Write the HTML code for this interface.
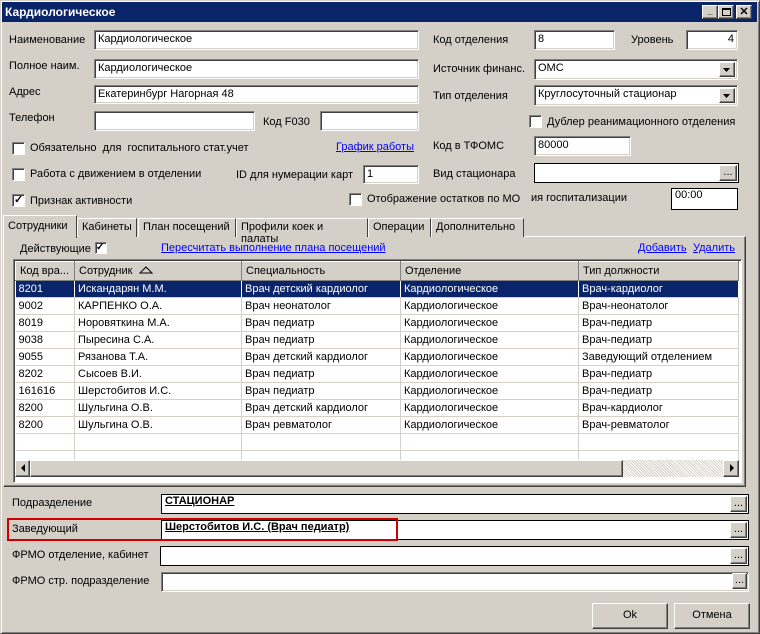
<!DOCTYPE html>
<html><head><meta charset="utf-8"><style>
*{box-sizing:border-box;margin:0;padding:0}
body{width:760px;height:634px;background:#d4d0c8;font-family:"Liberation Sans",sans-serif;font-size:11px;color:#000;position:relative;overflow:hidden}
.a{position:absolute;white-space:nowrap}
.in{position:absolute;background:#fff;border:1px solid;border-color:#808080 #fff #fff #808080;box-shadow:inset 1px 1px 0 #404040,inset -1px -1px 0 #d4d0c8;padding:2px 3px;line-height:13px}
.bk{position:absolute;background:#fff;border:1px solid #000;padding:1px 3px;line-height:13px}
.cb{position:absolute;width:13px;height:13px;background:#fff;border:1px solid;border-color:#808080 #fff #fff #808080;box-shadow:inset 1px 1px 0 #404040}
.btn{position:absolute;background:#d4d0c8;border:1px solid;border-color:#fff #404040 #404040 #fff;box-shadow:inset -1px -1px 0 #808080;text-align:center}
.lnk{color:#0000ff;text-decoration:underline}
.dd{position:absolute;right:2px;top:2px;width:16px;height:15px}
table{border-collapse:collapse;position:absolute;left:15px;top:261px;width:724px}
td{height:17px;border-right:1px solid #d4d0c8;border-bottom:1px solid #d4d0c8;padding:0 3px;background:#fff;white-space:nowrap}
th{height:19px;font-weight:normal;text-align:left;padding:0 4px;background:#d4d0c8;border:1px solid;border-color:#fff #808080 #808080 #fff}
tr.s td{background:#0a246a;color:#fff;border-right-color:#fff}
.tab{position:absolute;top:218px;height:19px;border:1px solid;border-color:#fff #404040 transparent #fff;border-bottom:none;padding:2px 4px;background:#d4d0c8}
</style></head><body>
<!-- frame -->
<div class="a" style="left:0;top:0;width:760px;height:634px;border:1px solid;border-color:#d4d0c8 #404040 #404040 #d4d0c8;box-shadow:inset 1px 1px 0 #fff,inset -1px -1px 0 #808080"></div>
<div class="a" style="left:2px;top:2px;width:755px;height:20px;background:#0a246a;color:#fff;font-weight:bold;font-size:12px;padding:3px 3px">Кардиологическое</div>
<div class="btn" style="left:702px;top:5px;width:16px;height:14px;font-size:9px;line-height:11px;font-weight:bold">_</div>
<div class="btn" style="left:718px;top:5px;width:16px;height:14px"><div style="margin:2px auto;width:9px;height:8px;border:1px solid #000;border-top-width:2px"></div></div>
<div class="btn" style="left:736px;top:5px;width:16px;height:14px;font-weight:bold;line-height:12px;font-size:11px">✕</div>

<div class="a" style="left:9px;top:34px">Наименование</div>
<div class="in" style="left:94px;top:30px;width:325px;height:20px">Кардиологическое</div>
<div class="a" style="left:9px;top:60px">Полное наим.</div>
<div class="in" style="left:94px;top:59px;width:325px;height:20px">Кардиологическое</div>
<div class="a" style="left:9px;top:86px">Адрес</div>
<div class="in" style="left:94px;top:85px;width:325px;height:19px">Екатеринбург Нагорная 48</div>
<div class="a" style="left:9px;top:112px">Телефон</div>
<div class="in" style="left:94px;top:111px;width:161px;height:20px"></div>
<div class="a" style="left:263px;top:116px">Код F030</div>
<div class="in" style="left:320px;top:111px;width:99px;height:20px"></div>

<div class="cb" style="left:12px;top:142px"></div><div class="a" style="left:30px;top:142px">Обязательно &nbsp;для &nbsp;госпитального стат.учет</div>
<div class="a lnk" style="left:336px;top:141px">График работы</div>
<div class="cb" style="left:12px;top:168px"></div><div class="a" style="left:30px;top:168px">Работа с движением в отделении</div>
<div class="a" style="left:236px;top:169px">ID для нумерации карт</div>
<div class="in" style="left:363px;top:165px;width:56px;height:19px">1</div>
<div class="cb" style="left:12px;top:194px"><div style="font-size:11px;line-height:10px;font-weight:bold;margin-left:1px">✓</div></div><div class="a" style="left:30px;top:195px">Признак активности</div>
<div class="cb" style="left:349px;top:193px"></div><div class="a" style="left:367px;top:193px">Отображение остатков по МО</div>
<div class="a" style="left:531px;top:192px">ия госпитализации</div>
<div class="bk" style="left:671px;top:188px;width:67px;height:22px;padding-top:0">00:00</div>

<div class="a" style="left:433px;top:34px">Код отделения</div>
<div class="in" style="left:534px;top:30px;width:81px;height:20px">8</div>
<div class="a" style="left:631px;top:34px">Уровень</div>
<div class="in" style="left:686px;top:30px;width:52px;height:20px;text-align:right">4</div>
<div class="a" style="left:433px;top:63px">Источник финанс.</div>
<div class="in" style="left:534px;top:59px;width:204px;height:21px">ОМС<div class="btn dd"><svg width="14" height="13"><path d="M3 5h7l-3.5 4z" fill="#000"/></svg></div></div>
<div class="a" style="left:433px;top:90px">Тип отделения</div>
<div class="in" style="left:534px;top:85px;width:204px;height:21px">Круглосуточный стационар<div class="btn dd"><svg width="14" height="13"><path d="M3 5h7l-3.5 4z" fill="#000"/></svg></div></div>
<div class="cb" style="left:529px;top:115px"></div><div class="a" style="left:547px;top:116px">Дублер реанимационного отделения</div>
<div class="a" style="left:433px;top:140px">Код в ТФОМС</div>
<div class="in" style="left:534px;top:136px;width:97px;height:20px">80000</div>
<div class="a" style="left:433px;top:168px">Вид стационара</div>
<div class="bk" style="left:534px;top:163px;width:205px;height:20px"><div class="btn" style="right:1px;top:1px;width:18px;height:16px;line-height:12px">...</div></div>

<!-- tabs panel -->
<div class="a" style="left:3px;top:236px;width:743px;height:251px;border:1px solid;border-color:#fff #404040 #404040 #fff;box-shadow:inset -1px -1px 0 #808080"></div>
<div class="tab" style="left:77px;width:60px">Кабинеты</div>
<div class="tab" style="left:138px;width:98px">План посещений</div>
<div class="tab" style="left:236px;width:132px">Профили коек и палаты</div>
<div class="tab" style="left:368px;width:63px">Операции</div>
<div class="tab" style="left:431px;width:93px">Дополнительно</div>
<div class="tab" style="left:3px;top:215px;width:74px;height:23px;padding-top:4px;border-bottom:none">Сотрудники</div>

<div class="a" style="left:20px;top:243px">Действующие</div>
<div class="cb" style="left:95px;top:242px;width:12px;height:12px"><div style="font-size:10px;line-height:9px;font-weight:bold">✓</div></div>
<div class="a lnk" style="left:161px;top:242px">Пересчитать выполнение плана посещений</div>
<div class="a lnk" style="left:638px;top:242px">Добавить</div>
<div class="a lnk" style="left:693px;top:242px">Удалить</div>

<div class="a" style="left:13px;top:259px;width:729px;height:224px;background:#fff;border:1px solid;border-color:#808080 #fff #fff #808080;box-shadow:inset 1px 1px 0 #404040"></div>
<table>
<tr><th style="width:59px">Код вра...</th><th style="width:167px">Сотрудник &nbsp;<svg width="14" height="8"><path d="M1 7L7 1L13 7Z" fill="none" stroke="#000"/></svg></th><th style="width:159px">Специальность</th><th style="width:178px">Отделение</th><th>Тип должности</th></tr>
<tr class="s"><td>8201</td><td>Искандарян М.М.</td><td>Врач детский кардиолог</td><td>Кардиологическое</td><td>Врач-кардиолог</td></tr>
<tr><td>9002</td><td>КАРПЕНКО О.А.</td><td>Врач неонатолог</td><td>Кардиологическое</td><td>Врач-неонатолог</td></tr>
<tr><td>8019</td><td>Норовяткина М.А.</td><td>Врач педиатр</td><td>Кардиологическое</td><td>Врач-педиатр</td></tr>
<tr><td>9038</td><td>Пыресина С.А.</td><td>Врач педиатр</td><td>Кардиологическое</td><td>Врач-педиатр</td></tr>
<tr><td>9055</td><td>Рязанова Т.А.</td><td>Врач детский кардиолог</td><td>Кардиологическое</td><td>Заведующий отделением</td></tr>
<tr><td>8202</td><td>Сысоев В.И.</td><td>Врач педиатр</td><td>Кардиологическое</td><td>Врач-педиатр</td></tr>
<tr><td>161616</td><td>Шерстобитов И.С.</td><td>Врач педиатр</td><td>Кардиологическое</td><td>Врач-педиатр</td></tr>
<tr><td>8200</td><td>Шульгина О.В.</td><td>Врач детский кардиолог</td><td>Кардиологическое</td><td>Врач-кардиолог</td></tr>
<tr><td>8200</td><td>Шульгина О.В.</td><td>Врач ревматолог</td><td>Кардиологическое</td><td>Врач-ревматолог</td></tr>
<tr><td></td><td></td><td></td><td></td><td></td></tr>
<tr><td style="height:10px"></td><td></td><td></td><td></td><td></td></tr>
</table>
<!-- hscroll -->
<div class="a" style="left:15px;top:460px;width:724px;height:17px;background:#e8e6e2;background-image:repeating-linear-gradient(45deg,#fff 0 1px,#d4d0c8 1px 2px)"></div>
<div class="btn" style="left:15px;top:460px;width:15px;height:17px"><svg width="12" height="14"><path d="M8 3v8L4 7z"/></svg></div>
<div class="btn" style="left:30px;top:460px;width:593px;height:17px"></div>
<div class="btn" style="left:723px;top:460px;width:16px;height:17px"><svg width="12" height="14"><path d="M5 3v8l4-4z"/></svg></div>

<!-- bottom -->
<div class="a" style="left:12px;top:497px">Подразделение</div>
<div class="bk" style="left:161px;top:494px;width:588px;height:20px;font-weight:bold;text-decoration:underline;padding-top:0">СТАЦИОНАР<div class="btn" style="right:1px;top:1px;width:17px;height:16px;line-height:12px;font-weight:normal;text-decoration:none">...</div></div>
<div class="a" style="left:12px;top:523px">Заведующий</div>
<div class="bk" style="left:161px;top:520px;width:588px;height:20px;font-weight:bold;text-decoration:underline;padding-top:0">Шерстобитов И.С. (Врач педиатр)<div class="btn" style="right:1px;top:1px;width:17px;height:16px;line-height:12px;font-weight:normal;text-decoration:none">...</div></div>
<div class="a" style="left:7px;top:518px;width:391px;height:23px;border:2px solid #d00000"></div>
<div class="a" style="left:12px;top:549px">ФРМО отделение, кабинет</div>
<div class="bk" style="left:160px;top:546px;width:589px;height:20px"><div class="btn" style="right:1px;top:1px;width:17px;height:16px;line-height:12px">...</div></div>
<div class="a" style="left:12px;top:575px">ФРМО стр. подразделение</div>
<div class="in" style="left:161px;top:572px;width:588px;height:20px"><div class="btn" style="right:1px;top:0;width:15px;height:16px;line-height:12px">...</div></div>

<div class="btn" style="left:592px;top:603px;width:76px;height:26px;line-height:22px">Ok</div>
<div class="btn" style="left:674px;top:603px;width:76px;height:26px;line-height:22px">Отмена</div>
</body></html>
